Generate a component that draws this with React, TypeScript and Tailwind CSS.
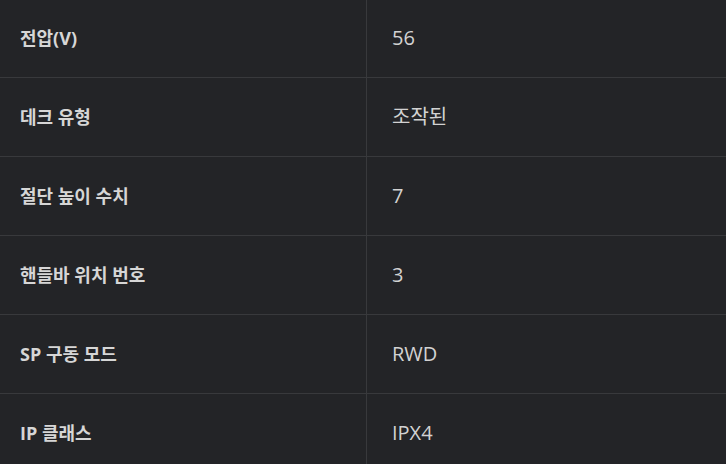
const rows: [string, string][] = [
  ['전압(V)', '56'],
  ['데크 유형', '조작된'],
  ['절단 높이 수치', '7'],
  ['핸들바 위치 번호', '3'],
  ['SP 구동 모드', 'RWD'],
  ['IP 클래스', 'IPX4'],
];

export default function App() {
  return (
    <div
      className="w-[726px] h-[464px] overflow-hidden bg-[#232427]"
      style={{ fontFamily: '"Open Sans", "Noto Sans CJK KR", sans-serif' }}
    >
      <div className="-mt-px">
        {rows.map(([label, value]) => (
          <div key={label} className="flex h-[79px] border-b border-[#38393c]">
            <div className="w-[366px] shrink-0 flex items-center pl-5 text-[18px] font-bold text-[#d6d6d6]">
              {label}
            </div>
            <div className="flex-1 flex items-center pl-[25px] border-l border-[#38393c] text-[20px] text-[#d2d2d2]">
              {value}
            </div>
          </div>
        ))}
      </div>
    </div>
  );
}
